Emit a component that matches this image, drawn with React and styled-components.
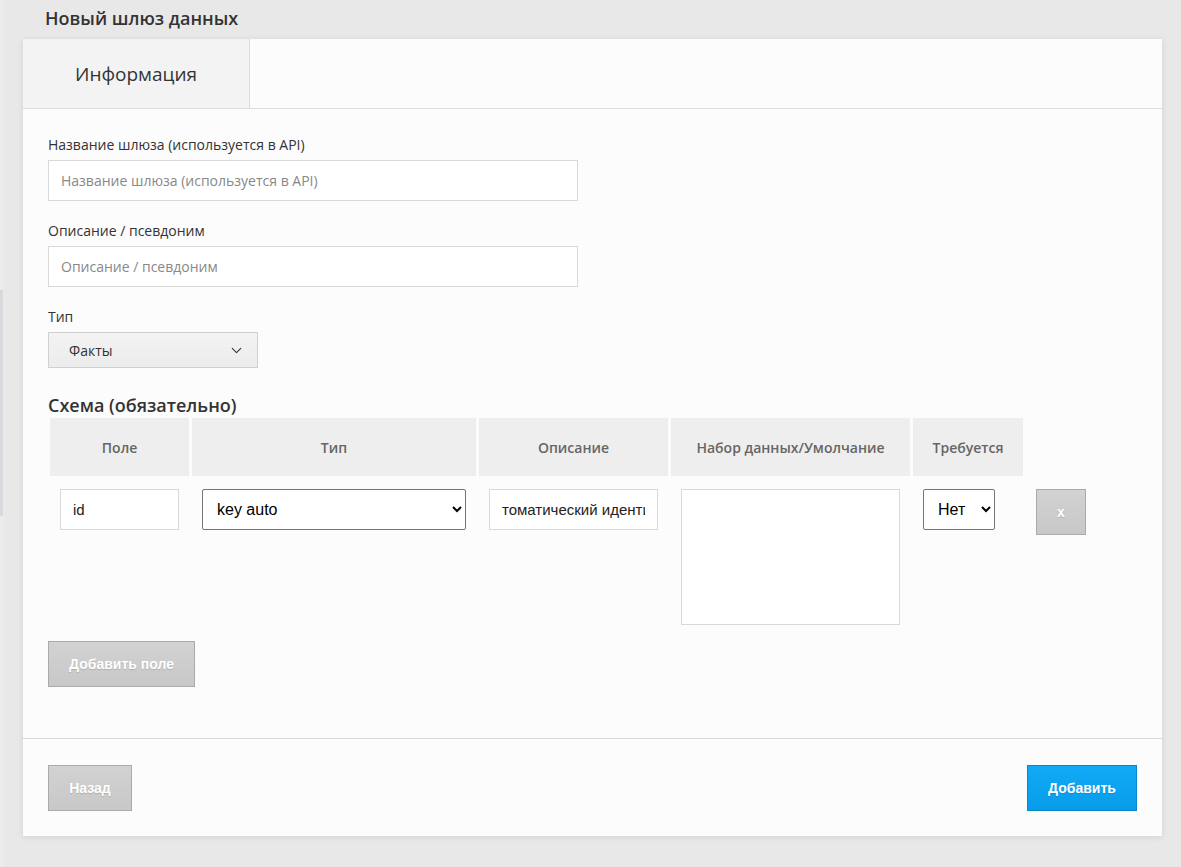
import styled, { createGlobalStyle } from 'styled-components';
import { ChevronDown } from 'lucide-react';

const GlobalStyle = createGlobalStyle`
  html, body {
    margin: 0;
    padding: 0;
    background: #e8e8e8;
    font-family: "Open Sans", "Liberation Sans", sans-serif;
    color: #333;
  }
  * { box-sizing: border-box; }
`;

const Page = styled.div`
  display: flex;
  min-height: 867px;
  background: #e8e8e8;
`;

const SideEdge = styled.div`
  width: 4px;
  background: #ebebeb;
  display: flex;
  flex-direction: column;
  padding-top: 290px;

  &::before {
    content: '';
    display: block;
    width: 3px;
    height: 226px;
    background: #d9d9dd;
  }
`;

const Main = styled.div`
  flex: 1;
  padding: 0 19px 32px 19px;
`;

const PageTitle = styled.h1`
  margin: 0;
  padding: 6px 0 8px 22px;
  font-size: 18px;
  line-height: 25px;
  font-weight: 600;
  color: #333;
`;

const Card = styled.div`
  background: #fcfcfc;
  box-shadow: 0 1px 6px rgba(0, 0, 0, 0.1);
`;

const TabBar = styled.div`
  display: flex;
  border-bottom: 1px solid #dcdcdc;
`;

const Tab = styled.div`
  width: 227px;
  height: 69px;
  display: flex;
  align-items: center;
  justify-content: center;
  background: #f3f3f3;
  border-right: 1px solid #dcdcdc;
  font-size: 19px;
  font-weight: 500;
  color: #333;
`;

const Body = styled.div`
  padding: 26px 25px 51px 25px;
`;

const Field = styled.div`
  display: flex;
  flex-direction: column;
  margin-bottom: 20px;
`;

const Label = styled.label`
  font-size: 14px;
  line-height: 19px;
  margin-bottom: 6px;
  color: #333;
`;

const TextInput = styled.input`
  width: ${(p) => p.$width || '100%'};
  height: 41px;
  border: 1px solid #d9d9d9;
  background: #fff;
  padding: 0 12px;
  font-family: ${(p) => (p.$plain ? '"Liberation Sans", Arial, sans-serif' : '"Open Sans", sans-serif')};
  font-size: ${(p) => (p.$plain ? '15px' : '14px')};
  color: #222;
  outline: none;

  &::placeholder {
    color: #888;
  }
`;

const FakeSelect = styled.div`
  width: 210px;
  height: 36px;
  display: flex;
  align-items: center;
  justify-content: space-between;
  padding: 0 12px 0 20px;
  border: 1px solid #d0d0d0;
  background: linear-gradient(#f3f3f3, #ececec);
  font-size: 14px;
  color: #333;
`;

const SectionTitle = styled.h2`
  margin: 25px 0 0 0;
  font-size: 18px;
  line-height: 24px;
  font-weight: 600;
  color: #333;
`;

const Table = styled.table`
  width: 100%;
  border-collapse: separate;
  border-spacing: 3px;
  margin-left: -1px;
  margin-top: -2px;
`;

const Th = styled.th`
  width: ${(p) => p.$w};
  height: 58px;
  background: #eeeeee;
  font-size: 14px;
  font-weight: 600;
  color: #666;
  text-align: center;
  padding: 0;
`;

const EmptyTh = styled.th`
  background: transparent;
`;

const Td = styled.td`
  padding: 10px;
  vertical-align: top;
`;

const NativeSelect = styled.select`
  width: ${(p) => p.$width || '100%'};
  height: 41px;
  font-family: "Liberation Sans", Arial, sans-serif;
  font-size: 16px;
  color: #000;
  background: #fff;
  border: 1px solid #767676;
  border-radius: 2px;
  padding: 0 ${(p) => (p.$pad ? p.$pad : '10px')};
`;

const TextArea = styled.textarea`
  width: 100%;
  height: 136px;
  border: 1px solid #d9d9d9;
  background: #fff;
  resize: none;
  display: block;
`;

const GreyButton = styled.button`
  width: ${(p) => p.$w};
  height: 46px;
  border: 1px solid #aaa;
  background: linear-gradient(#d2d2d2, #c8c8c8);
  color: #fff;
  font-family: "Liberation Sans", Arial, sans-serif;
  font-weight: 700;
  font-size: 14px;
  text-shadow: 0 1px 1px rgba(0, 0, 0, 0.15);
  cursor: pointer;
`;

const PrimaryButton = styled.button`
  width: 110px;
  height: 46px;
  border: 1px solid #0a88cc;
  background: linear-gradient(#11aaf6, #079ce9);
  color: #fff;
  font-family: "Liberation Sans", Arial, sans-serif;
  font-weight: 700;
  font-size: 14px;
  text-shadow: 0 1px 1px rgba(0, 0, 0, 0.1);
  cursor: pointer;
`;

const AddFieldRow = styled.div`
  margin-top: 3px;
`;

const Footer = styled.div`
  border-top: 1px solid #d9d9d9;
  padding: 26px 25px 25px 25px;
  display: flex;
  justify-content: space-between;
  align-items: center;
`;

export default function App() {
  return (
    <>
      <GlobalStyle />
      <Page>
        <SideEdge />
        <Main>
          <PageTitle>Новый шлюз данных</PageTitle>
          <Card>
            <TabBar>
              <Tab>Информация</Tab>
            </TabBar>
            <Body>
              <Field>
                <Label>Название шлюза (используется в API)</Label>
                <TextInput $width="530px" placeholder="Название шлюза (используется в API)" />
              </Field>
              <Field>
                <Label>Описание / псевдоним</Label>
                <TextInput $width="530px" placeholder="Описание / псевдоним" />
              </Field>
              <Field>
                <Label>Тип</Label>
                <FakeSelect>
                  <span>Факты</span>
                  <ChevronDown size={17} strokeWidth={1.5} color="#333" />
                </FakeSelect>
              </Field>

              <SectionTitle>Схема (обязательно)</SectionTitle>
              <Table>
                <thead>
                  <tr>
                    <Th $w="139px">Поле</Th>
                    <Th $w="284px">Тип</Th>
                    <Th $w="189px">Описание</Th>
                    <Th $w="239px">Набор данных/Умолчание</Th>
                    <Th $w="110px">Требуется</Th>
                    <EmptyTh />
                  </tr>
                </thead>
                <tbody>
                  <tr>
                    <Td>
                      <TextInput $plain defaultValue="id" />
                    </Td>
                    <Td>
                      <NativeSelect defaultValue="key auto">
                        <option>key auto</option>
                        <option>string</option>
                        <option>integer</option>
                      </NativeSelect>
                    </Td>
                    <Td>
                      <TextInput $plain defaultValue="томатический идентификатор" />
                    </Td>
                    <Td>
                      <TextArea />
                    </Td>
                    <Td>
                      <NativeSelect $width="72px" $pad="10px" defaultValue="Нет">
                        <option>Нет</option>
                        <option>Да</option>
                      </NativeSelect>
                    </Td>
                    <Td>
                      <GreyButton $w="50px">x</GreyButton>
                    </Td>
                  </tr>
                </tbody>
              </Table>
              <AddFieldRow>
                <GreyButton $w="147px">Добавить поле</GreyButton>
              </AddFieldRow>
            </Body>
            <Footer>
              <GreyButton $w="84px">Назад</GreyButton>
              <PrimaryButton>Добавить</PrimaryButton>
            </Footer>
          </Card>
        </Main>
      </Page>
    </>
  );
}
